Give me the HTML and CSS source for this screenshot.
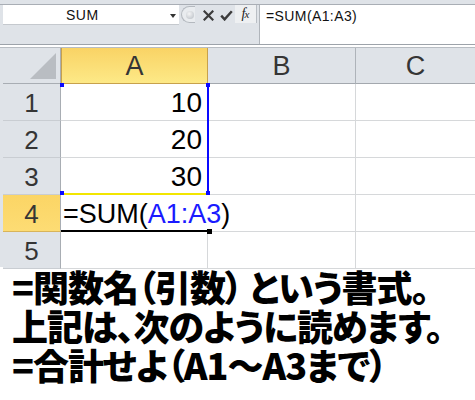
FILE: index.html
```html
<!DOCTYPE html>
<html lang="ja">
<head>
<meta charset="utf-8">
<link rel="stylesheet" href="styles.css">
</head>
<body>
<div class="page">
  <div class="top-strip"></div>
  <div class="fbar">
    <div class="namebox-col">
      <div class="namebox"><span class="nb-text">SUM</span><span class="nb-arrow"></span></div>
    </div>
    <div class="controls">
      <div class="knob"><span class="knob-dot"></span></div>
      <svg class="ico-x" width="11" height="11" viewBox="0 0 11 11"><path d="M1.5 1.5 L9.5 9.5 M9.5 1.5 L1.5 9.5" stroke="#3c3c3c" stroke-width="2.2" stroke-linecap="square"/></svg>
      <svg class="ico-check" width="13" height="11" viewBox="0 0 13 11"><path d="M1.2 5.6 L4.6 9.4 L11.8 1.2" fill="none" stroke="#3c3c3c" stroke-width="2.4"/></svg>
      <div class="fx-col"><div class="fx"><i>f</i><i class="fx-x">x</i></div></div>
    </div>
    <div class="formula">=SUM(A1:A3)</div>
  </div>
  <div class="sep"></div>
  <div class="sheet">
    <div class="grid">
      <div class="corner"><svg width="26" height="26" viewBox="0 0 26 26"><polygon points="26,0 26,26 0,26" fill="#b9bdc2"/></svg></div>
      <div class="colhead colhead-active">A</div>
      <div class="colhead">B</div>
      <div class="colhead colhead-last">C</div>

      <div class="rowhead">1</div>
      <div class="cell num">10</div>
      <div class="cell"></div>
      <div class="cell last"></div>

      <div class="rowhead">2</div>
      <div class="cell num">20</div>
      <div class="cell"></div>
      <div class="cell last"></div>

      <div class="rowhead">3</div>
      <div class="cell num">30</div>
      <div class="cell"></div>
      <div class="cell last"></div>

      <div class="rowhead rowhead-active">4</div>
      <div class="cell active-cell"><span class="edit">=SUM(<span class="ref">A1:A3</span>)</span></div>
      <div class="cell"></div>
      <div class="cell last"></div>

      <div class="rowhead">5</div>
      <div class="cell"></div>
      <div class="cell"></div>
      <div class="cell last"></div>

      <div class="range-box">
        <span class="sq sq-tl"></span><span class="sq sq-tr"></span>
        <span class="sq sq-bl"></span><span class="sq sq-br"></span>
      </div>
      <div class="active-line"><span class="handle"></span></div>
    </div>
  </div>
  <div class="caption">
    <div class="line">=関数名（引数） という書式。</div>
    <div class="line">上記は、次のように読めます。</div>
    <div class="line">=合計せよ（A1～A3まで）</div>
  </div>
</div>
</body>
</html>
```
FILE: styles.css
```css
* { box-sizing: border-box; }
html, body { margin: 0; padding: 0; }
body {
  width: 475px;
  height: 400px;
  overflow: hidden;
  background: #ffffff;
  font-family: "Liberation Sans", Arial, sans-serif;
}
.page { width: 475px; }

.top-strip {
  height: 5px;
  background: #dfe3e8;
  border-bottom: 1px solid #a9aeb5;
}

.fbar {
  display: flex;
  height: 39px;
  background: #dfe3e8;
  padding-left: 3px;
}
.namebox-col {
  width: 176px;
}
.namebox {
  height: 20px;
  background: #ffffff;
  border-bottom: 1px solid #c5c9ce;
  display: flex;
  align-items: center;
  position: relative;
}
.nb-text {
  font-size: 14px;
  color: #111;
  margin-left: 63px;
  letter-spacing: 0.5px;
}
.nb-arrow {
  position: absolute;
  left: 167px;
  top: 9px;
  width: 0; height: 0;
  border-left: 3.5px solid transparent;
  border-right: 3.5px solid transparent;
  border-top: 4px solid #333;
}
.controls {
  display: flex;
  align-items: flex-start;
  width: 80px;
}
.knob {
  width: 14px;
  height: 17px;
  margin-top: 1px;
  margin-left: 2px;
  border: 1px solid #b4b9bf;
  border-right: none;
  border-radius: 9px 0 0 9px;
  display: flex;
  align-items: center;
  justify-content: center;
  background: #e9ecef;
}
.knob-dot {
  width: 8px; height: 8px;
  border-radius: 50%;
  background: radial-gradient(circle at 40% 35%, #f4f5f6 0%, #c9cdd2 70%, #aeb3b9 100%);
  margin-left: 2px;
}
.ico-x { margin-top: 5px; margin-left: 8px; }
.ico-check { margin-top: 5px; margin-left: 6px; }
.fx-col {
  margin-left: 2px;
  width: 22px;
  height: 18px;
  border-right: 1px solid #b9bec4;
  background: #eef0f2;
  display: flex;
  align-items: center;
  justify-content: center;
}
.fx {
  font-family: "Liberation Serif", "Times New Roman", serif;
  font-size: 14px;
  color: #222;
  line-height: 1;
}
.fx-x { font-size: 11px; margin-left: -1px; }
.formula {
  flex: 1;
  background: #ffffff;
  border-left: 1px solid #b0b5bb;
  font-size: 14px;
  color: #111;
  padding: 3px 0 0 6px;
  letter-spacing: 0.4px;
}

.sep {
  height: 4px;
  background: #ffffff;
  border-top: 1px solid #9da3aa;
  border-bottom: 1px solid #b8bdc3;
}

.sheet {
  padding-left: 3px;
  background: #dfe3e8;
}
.grid {
  position: relative;
  display: grid;
  grid-template-columns: 58px 147px 148px 1fr;
  grid-template-rows: 36px repeat(5, 37px);
  background: #ffffff;
}
.corner {
  background: #dfe3e8;
  border-right: 1px solid #a8adb3;
  border-bottom: 1px solid #a8adb3;
  display: flex;
  align-items: flex-end;
  justify-content: flex-end;
  padding: 0 4px 4px 0;
}
.corner svg { display: block; }
.colhead {
  background: #dfe3e8;
  border-right: 1px solid #aeb3b9;
  border-bottom: 1px solid #a3a8ae;
  display: flex;
  align-items: center;
  justify-content: center;
  font-size: 27px;
  color: #353535;
  padding-top: 2px;
}
.colhead-last { border-right: none; }
.colhead-active {
  background: linear-gradient(#f9d365, #fde987);
  border: 1px solid #c7a14c;
  border-top: none;
}
.rowhead {
  background: #dfe3e8;
  border-right: 1px solid #a8adb3;
  border-bottom: 1px solid #c9cdd2;
  display: flex;
  align-items: center;
  justify-content: center;
  font-size: 26px;
  color: #353535;
  padding-top: 2px;
}
.rowhead-active {
  background: linear-gradient(#fbd565, #fddc74);
  border-bottom-color: #d8b45a;
}
.cell {
  border-right: 1px solid #d6d8da;
  border-bottom: 1px solid #d6d8da;
  font-size: 28px;
  color: #000;
  display: flex;
  align-items: center;
  padding-top: 2px;
  white-space: nowrap;
}
.cell.last { border-right: none; }
.num {
  justify-content: flex-end;
  padding-right: 5px;
}
.active-cell {
  border-right-color: transparent;
  overflow: visible;
  padding-left: 2px;
  font-size: 27px;
}
.ref { color: #1a1aff; }

.range-box {
  position: absolute;
  left: 57px;
  top: 35px;
  width: 149px;
  height: 112px;
  border-right: 2px solid #0a0aff;
  border-bottom: 2px solid #f2e600;
  pointer-events: none;
}
.sq {
  position: absolute;
  width: 4px; height: 4px;
  background: #0a0aff;
}
.sq-tl { left: 0; top: 0; }
.sq-tr { right: -3px; top: 0; }
.sq-bl { left: 0; bottom: -2px; }
.sq-br { right: -3px; bottom: -2px; }
.active-line {
  position: absolute;
  left: 58px;
  top: 182px;
  width: 146px;
  height: 2px;
  background: #000;
}
.handle {
  position: absolute;
  right: -5px;
  top: -1px;
  width: 5px; height: 5px;
  background: #000;
}

.caption {
  background: #ffffff;
  padding: 0 0 0 12px;
  font-family: "Noto Sans CJK JP", sans-serif;
  font-weight: 900;
  font-size: 36px;
  font-feature-settings: "palt" 1;
  letter-spacing: -1px;
  line-height: 39px;
  color: #000;
  white-space: nowrap;
  margin-top: -2px;
}
```
